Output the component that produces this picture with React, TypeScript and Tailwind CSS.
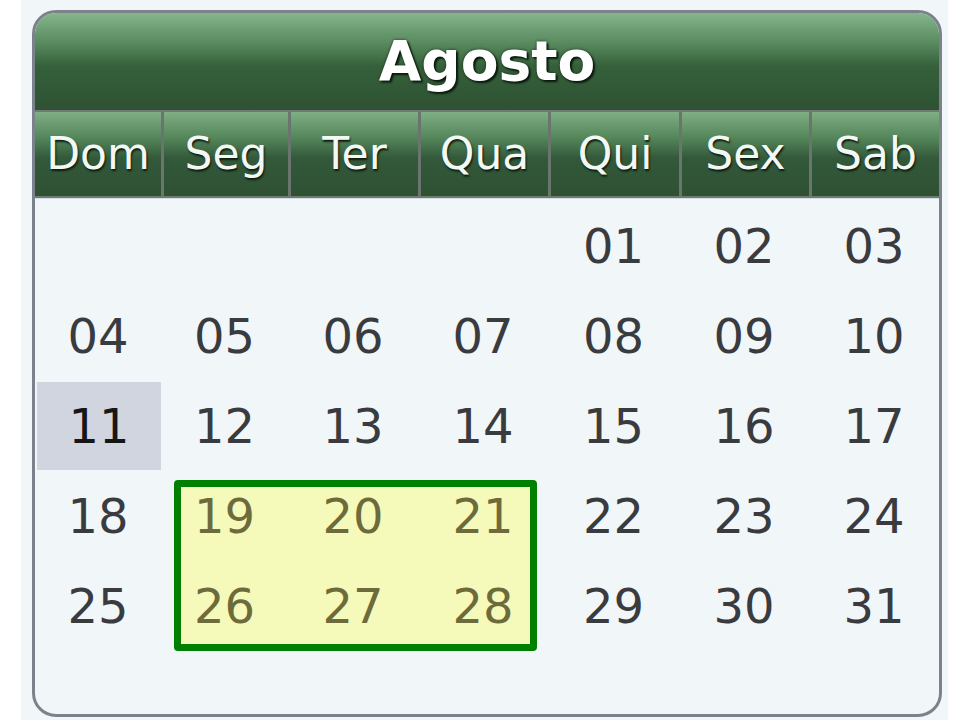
const DAYS = ["Dom", "Seg", "Ter", "Qua", "Qui", "Sex", "Sab"];

const SELECTED = [19, 20, 21, 26, 27, 28];

function buildWeeks() {
  const cells: (number | null)[] = [null, null, null, null];
  for (let d = 1; d <= 31; d++) cells.push(d);
  const weeks: (number | null)[][] = [];
  for (let i = 0; i < cells.length; i += 7) weeks.push(cells.slice(i, i + 7));
  return weeks;
}

export default function App() {
  const weeks = buildWeeks();
  const cols = "grid-cols-[126px_127px_130px_130px_131px_130px_1fr]";

  return (
    <div className="h-[720px] w-[960px] bg-white">
      <div
        className="ml-[21px] h-[720px] w-[927px] bg-[#f1f6f8] pl-[11px] pt-[10px]"
        style={{ fontFamily: '"DejaVu Sans", Verdana, sans-serif' }}
      >
        <div className="flex h-[707px] w-[910px] flex-col overflow-hidden rounded-[24px] border-[3px] border-[#7c828b] bg-[#f1f6f8]">
          {/* month title */}
          <div className="flex h-[97px] shrink-0 items-center justify-center bg-[linear-gradient(to_bottom,#86b58c_0%,#5a8c60_30%,#35603a_55%,#2e5233_100%)]">
            <span className="text-[55px] font-bold leading-none text-white [text-shadow:2px_2px_2px_#0a1a0c,0_0_3px_#1a2e1c]">
              Agosto
            </span>
          </div>

          {/* weekday header */}
          <div className={"grid h-[88px] shrink-0 border-y-2 border-[#6f7a72] " + cols}>
            {DAYS.map((d, i) => (
              <div
                key={d}
                className={
                  "flex items-center justify-center bg-[linear-gradient(to_bottom,#80ae85_0%,#55875b_30%,#33593a_55%,#2e5132_100%)] " +
                  (i > 0 ? "border-l-[3px] border-[#6a766d]" : "")
                }
              >
                <span className="text-[44px] leading-none text-[#f4f8f4] [text-shadow:1px_2px_2px_#0c1c0e]">
                  {d}
                </span>
              </div>
            ))}
          </div>

          {/* days */}
          <div className="relative flex-1 border-t border-[#d5dde4] pt-[3px]">
            <div className="absolute left-[139px] top-[281px] h-[171px] w-[363px] rounded-[4px] border-[7px] border-[#008000] bg-[#f5f9b9]" />
            <div className={"relative grid gap-y-[2px] " + cols}>
              {weeks.flat().map((n, i) => {
                const sel = n !== null && SELECTED.includes(n);
                const today = n === 11;
                return (
                  <div
                    key={i}
                    className={
                      "flex h-[88px] items-center justify-center text-[48px] leading-none " +
                      (today ? "ml-[2px] bg-[#d0d5df] text-[#161616] " : "") +
                      (sel ? "text-[#6d6a3c] " : today ? "" : "text-[#3a3b3f]")
                    }
                  >
                    {n !== null ? String(n).padStart(2, "0") : ""}
                  </div>
                );
              })}
            </div>
          </div>
        </div>
      </div>
    </div>
  );
}
